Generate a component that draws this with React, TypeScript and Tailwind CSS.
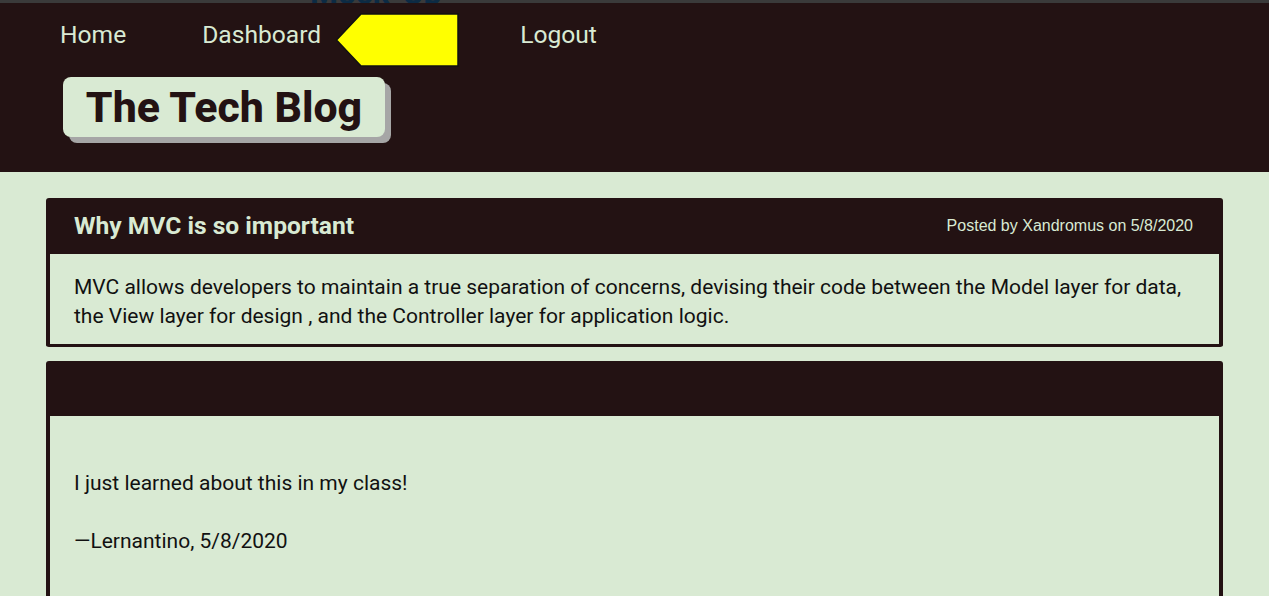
import React from "react";

const roboto = { fontFamily: "Roboto, 'Liberation Sans', sans-serif" };

function Arrow() {
  // yellow annotation pointer over the nav
  return (
    <svg
      className="absolute left-[335px] top-[10px]"
      width="125"
      height="56"
      viewBox="0 0 125 56"
    >
      <polygon
        points="1.5,27 26,1 123,1 123,53 26,53"
        fill="#ffff00"
        stroke="#111"
        strokeWidth="1.5"
      />
    </svg>
  );
}

export default function App() {
  return (
    <div className="min-h-[596px] bg-[#d9ead3] font-['Roboto','Liberation_Sans',sans-serif]">
      {/* top strip with clipped title behind */}
      <div className="relative h-[3px] overflow-hidden bg-[#3a3a3a]">
        <p className="absolute left-[310px] bottom-[-5px] text-[32px] font-bold leading-[30px] text-[#0c2b44]">
          Mock-Up
        </p>
      </div>

      {/* Header */}
      <header className="relative h-[169px] bg-[#231213]">
        <nav className="flex pt-[17px] text-[24.6px] leading-[30px] text-[#d9ead3]">
          <a className="ml-[60px]">Home</a>
          <a className="ml-[76px]">Dashboard</a>
          <a className="ml-[199px]">Logout</a>
        </nav>
        <div className="ml-[63px] mt-[27px] inline-flex h-[60px] w-[322px] items-center justify-center rounded-[8px] bg-[#d9ead3] shadow-[6px_6px_0_#a6a6a6]">
          <h1 className="text-[42.8px] font-extrabold leading-none text-[#231213]">The Tech Blog</h1>
        </div>
        <Arrow />
      </header>

      {/* Posts */}
      <main className="px-[46px] pt-[26px]" style={roboto}>
        <section className="rounded-[3px] border-x-4 border-b-[3px] border-[#231213]">
          <div className="flex h-[56px] items-center justify-between bg-[#231213] pl-[24px] pr-[26px]">
            <h2 className="text-[24.6px] font-bold text-[#d9ead3]">Why MVC is so important</h2>
            <span className="font-['Liberation_Sans',Arial,sans-serif] text-[16px] text-[#d9ead3]">
              Posted by Xandromus on 5/8/2020
            </span>
          </div>
          <p className="pl-[24px] pr-[20px] pt-[19px] pb-[13px] text-[21px] leading-[29px] text-[#111]">
            MVC allows developers to maintain a true separation of concerns, devising their code between the Model layer for data,
            the View layer for design , and the Controller layer for application logic.
          </p>
        </section>

        <section className="mt-[14px] rounded-t-[3px] border-x-4 border-[#231213]">
          <div className="h-[55px] bg-[#231213]" />
          <div className="pl-[24px] pt-[52px] pb-[40px] text-[21px] leading-[30px] text-[#111]">
            <p>I just learned about this in my class!</p>
            <p className="mt-[28px]">—Lernantino, 5/8/2020</p>
          </div>
        </section>
      </main>
    </div>
  );
}
